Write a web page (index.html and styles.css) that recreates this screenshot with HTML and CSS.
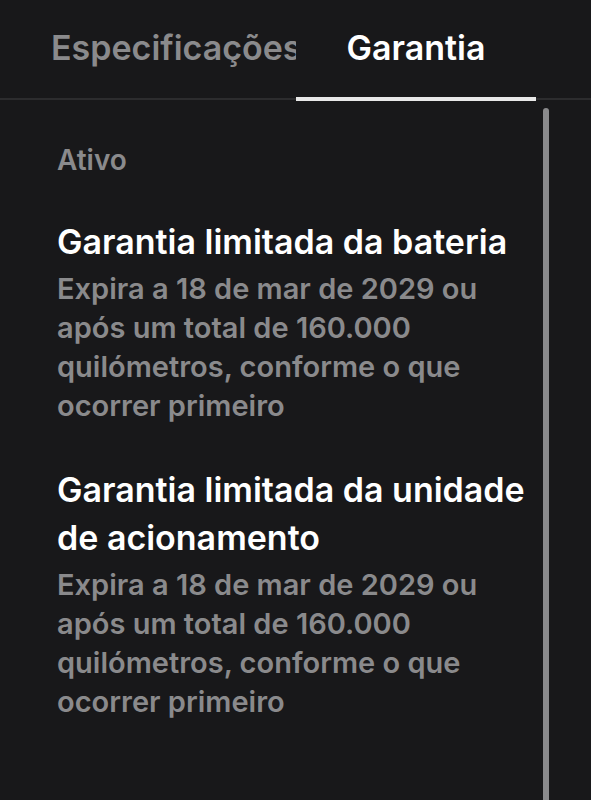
FILE: index.html
```html
<!DOCTYPE html>
<html lang="pt">
<head>
    <meta charset="UTF-8">
    <meta name="viewport" content="width=device-width, initial-scale=1.0">
    <title>Garantia</title>
    <link rel="stylesheet" href="styles.css">
</head>
<body>
    <div class="tabs">
        <div class="tab">Especificações</div>
        <div class="tab active">Garantia</div>
    </div>
    <div class="content">
        <div class="panel">
            <div class="label">Ativo</div>
            <div class="item">
                <div class="item-title">Garantia limitada da bateria</div>
                <div class="item-text">Expira a 18 de mar de 2029 ou após um total de 160.000 quilómetros, conforme o que ocorrer primeiro</div>
            </div>
            <div class="item">
                <div class="item-title">Garantia limitada da unidade de acionamento</div>
                <div class="item-text">Expira a 18 de mar de 2029 ou após um total de 160.000 quilómetros, conforme o que ocorrer primeiro</div>
            </div>
        </div>
        <div class="scrollbar"></div>
    </div>
</body>
</html>
```

FILE: styles.css
```css
body {
    margin: 0;
    background: #18181a;
    font-family: Inter, "Noto Sans", sans-serif;
    color: #ffffff;
    height: 800px;
    overflow: hidden;
}
.tabs {
    display: flex;
    height: 100px;
    padding-left: 51px;
    border-bottom: 2px solid #2c2c2e;
    box-sizing: border-box;
}
.tab {
    width: 245px;
    overflow: hidden;
    white-space: nowrap;
    font-size: 34px;
    font-weight: 600;
    color: #8a8a8c;
    padding-top: 27px;
    box-sizing: border-box;
}
.tab.active {
    width: 240px;
    text-align: center;
    color: #ffffff;
    border-bottom: 4px solid #e8e8e8;
    margin-bottom: -3px;
}
.content {
    display: flex;
}
.panel {
    width: 486px;
    padding: 43px 0 0 57px;
}
.label {
    font-size: 28px;
    font-weight: 600;
    line-height: 34px;
    color: #8a8a8c;
    margin-bottom: 41px;
}
.item {
    margin-bottom: 41px;
}
.item-title {
    font-size: 34px;
    font-weight: 600;
    line-height: 48px;
    margin-bottom: 3px;
}
.item-text {
    font-size: 29px;
    font-weight: 600;
    line-height: 39px;
    color: #8a8a8c;
}
.scrollbar {
    width: 6px;
    height: 700px;
    margin-top: 8px;
    background: #8a8a8c;
    border-radius: 3px 3px 0 0;
}
```
